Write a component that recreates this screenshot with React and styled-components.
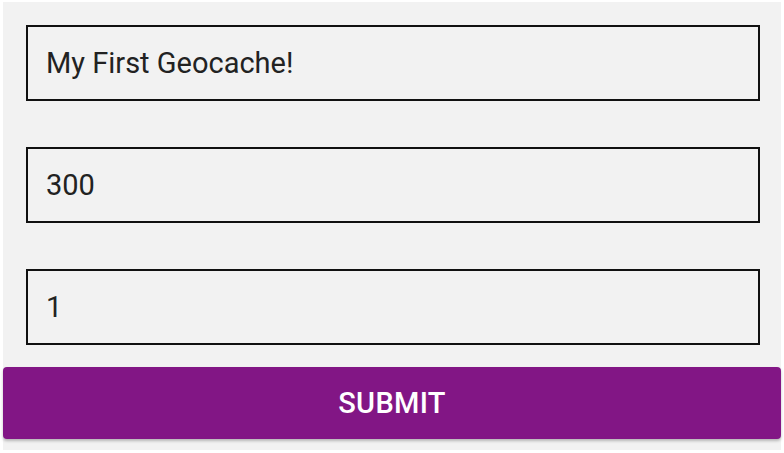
import React from "react";
import styled, { createGlobalStyle } from "styled-components";

const GlobalStyle = createGlobalStyle`
  body {
    margin: 0;
    background: #ffffff;
    font-family: Roboto, "Noto Sans", sans-serif;
  }
`;

const Page = styled.div`
  margin: 2px 3px 3px 3px;
  height: 448px;
  background: #f2f2f2;
  display: flex;
  flex-direction: column;
`;

const Form = styled.form`
  display: flex;
  flex-direction: column;
`;

const Fields = styled.div`
  display: flex;
  flex-direction: column;
  gap: 46px;
  padding: 23px 21px 0 23px;
`;

const Field = styled.input`
  box-sizing: border-box;
  width: 734px;
  height: 76px;
  margin: 0;
  padding: 0 0 0 18px;
  border: 2px solid #111111;
  border-radius: 0;
  background: transparent;
  font-family: Roboto, sans-serif;
  font-size: 29px;
  color: #222222;
  outline: none;
`;

const SubmitButton = styled.button`
  margin-top: 22px;
  height: 72px;
  border: none;
  border-radius: 4px;
  background: #821685;
  color: #ffffff;
  font-family: Roboto, sans-serif;
  font-size: 29px;
  font-weight: 500;
  letter-spacing: 0.3px;
  text-transform: uppercase;
  box-shadow: 0 2px 3px rgba(0, 0, 0, 0.25);
  cursor: pointer;
`;

const fields = [
  { name: "title", value: "My First Geocache!" },
  { name: "radius", value: "300" },
  { name: "difficulty", value: "1" },
];

export default function App() {
  return (
    <>
      <GlobalStyle />
      <Page>
        <Form onSubmit={(e) => e.preventDefault()}>
          <Fields>
            {fields.map((f) => (
              <Field key={f.name} name={f.name} defaultValue={f.value} />
            ))}
          </Fields>
          <SubmitButton type="submit">Submit</SubmitButton>
        </Form>
      </Page>
    </>
  );
}
